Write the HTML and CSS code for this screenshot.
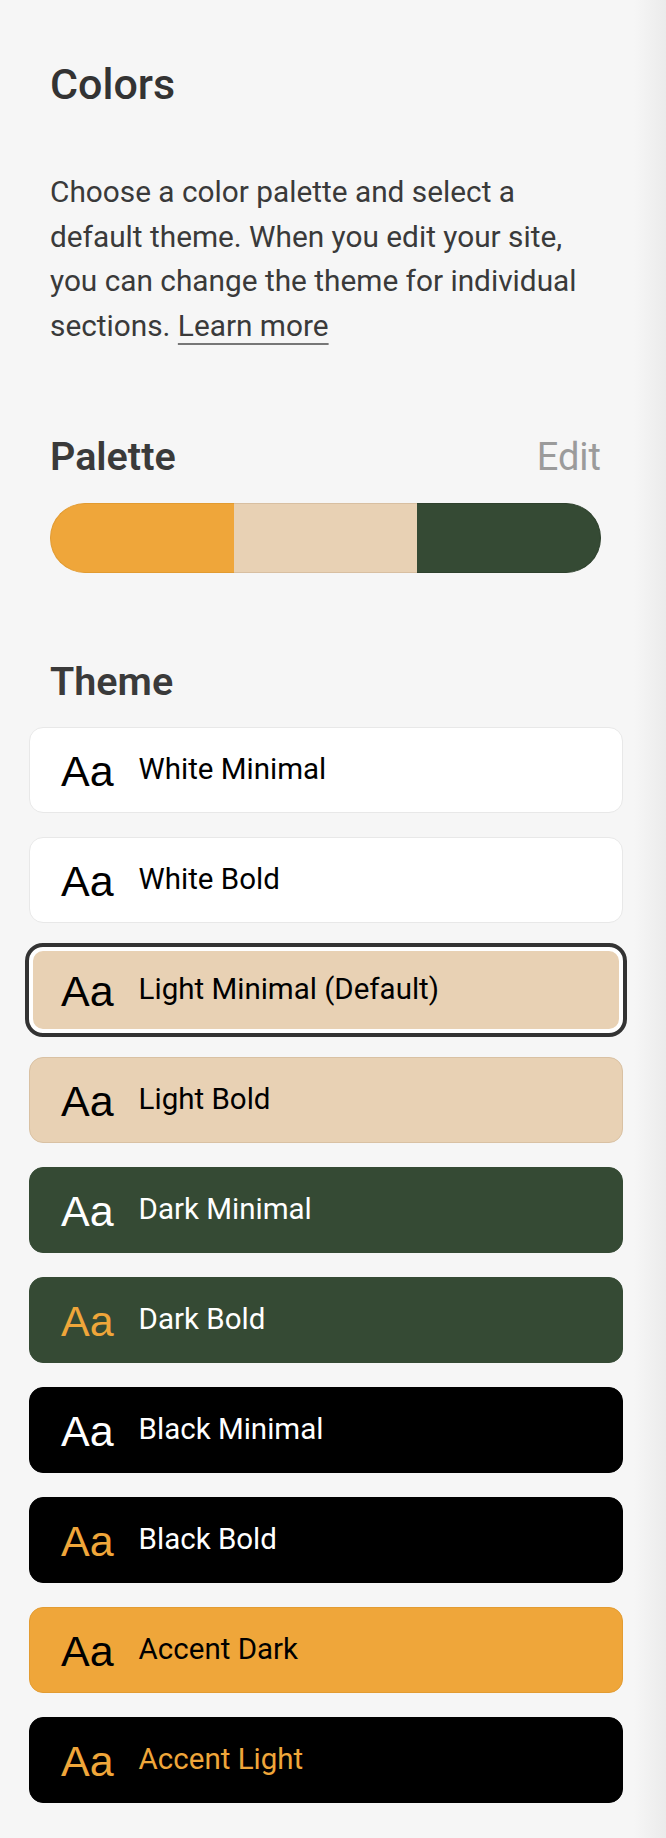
FILE: index.html
```html
<!DOCTYPE html>
<html lang="en">
<head>
<meta charset="utf-8">
<title>Colors</title>
<link rel="stylesheet" href="styles.css">
</head>
<body>
<main class="panel">
  <h1 class="title">Colors</h1>
  <p class="intro">Choose a color palette and select a default theme. When you edit your site, you can change the theme for individual sections. <a class="learn" href="#">Learn more</a></p>

  <div class="section-head palette-head">
    <h2 class="section-title">Palette</h2>
    <span class="edit">Edit</span>
  </div>
  <div class="palette">
    <span class="swatch swatch-accent"></span>
    <span class="swatch swatch-light"></span>
    <span class="swatch swatch-dark"></span>
  </div>

  <div class="section-head theme-head">
    <h2 class="section-title">Theme</h2>
  </div>
  <ul class="themes">
    <li class="theme theme-white"><span class="aa">Aa</span><span class="label">White Minimal</span></li>
    <li class="theme theme-white"><span class="aa">Aa</span><span class="label">White Bold</span></li>
    <li class="theme theme-light selected"><span class="aa">Aa</span><span class="label">Light Minimal (Default)</span></li>
    <li class="theme theme-light"><span class="aa">Aa</span><span class="label">Light Bold</span></li>
    <li class="theme theme-dark"><span class="aa">Aa</span><span class="label">Dark Minimal</span></li>
    <li class="theme theme-dark accent-aa"><span class="aa">Aa</span><span class="label">Dark Bold</span></li>
    <li class="theme theme-black"><span class="aa">Aa</span><span class="label">Black Minimal</span></li>
    <li class="theme theme-black accent-aa"><span class="aa">Aa</span><span class="label">Black Bold</span></li>
    <li class="theme theme-accent"><span class="aa">Aa</span><span class="label">Accent Dark</span></li>
    <li class="theme theme-black accent-all"><span class="aa">Aa</span><span class="label">Accent Light</span></li>
  </ul>
</main>
</body>
</html>
```
FILE: styles.css
```css
html, body {
  margin: 0;
  padding: 0;
}

body {
  min-height: 1838px;
  background: linear-gradient(to right, #f6f6f6 0, #f6f6f6 634px, #ebebeb 666px);
  font-family: Roboto, "Liberation Sans", Arial, sans-serif;
  color: #333;
}

.panel {
  padding: 60px 65px 35px 50px;
}

.title {
  margin: 0;
  font-size: 43px;
  line-height: 48px;
  font-weight: 500;
  color: #333;
}

.intro {
  margin: 62px 0 0;
  font-size: 29.8px;
  line-height: 44.5px;
  font-weight: 400;
  color: #3a3a3a;
}

.learn {
  color: #3a3a3a;
  text-decoration: underline;
  text-decoration-color: #777;
  text-decoration-thickness: 2px;
  text-underline-offset: 7px;
}

.section-head {
  display: flex;
  justify-content: space-between;
  align-items: baseline;
}

.palette-head {
  margin-top: 86px;
}

.theme-head {
  margin-top: 86.5px;
}

.section-title {
  margin: 0;
  font-size: 39.5px;
  line-height: 45px;
  font-weight: 600;
  color: #3a3a3a;
}

.edit {
  font-size: 38px;
  line-height: 45px;
  font-weight: 400;
  color: #9b9b9b;
}

.palette {
  display: flex;
  height: 70px;
  margin-top: 22.5px;
}

.swatch {
  flex: 1;
  box-sizing: border-box;
  border-top: 1px solid;
  border-bottom: 1px solid;
}

.swatch-accent {
  background: #efa63a;
  border-color: #e29b31;
  border-left: 1px solid #e29b31;
  border-radius: 35px 0 0 35px;
}

.swatch-light {
  background: #e8d1b4;
  border-color: #d8bfa1;
}

.swatch-dark {
  background: #354a34;
  border-color: #2e412d;
  border-right: 1px solid #2e412d;
  border-radius: 0 35px 35px 0;
}

.themes {
  list-style: none;
  margin: 23px -22px 0 -21px;
  padding: 0;
  display: flex;
  flex-direction: column;
  gap: 24px;
}

.theme {
  box-sizing: border-box;
  height: 86px;
  display: flex;
  align-items: center;
  gap: 25px;
  padding: 0 31px;
  border: 1px solid transparent;
  border-radius: 14px;
  color: #000;
}

.aa {
  font-family: "Liberation Sans", Arial, sans-serif;
  font-size: 43px;
  line-height: 1;
  padding-top: 3px;
}

.label {
  font-size: 29.5px;
  line-height: 1.2;
  font-weight: 400;
}

.theme-white {
  background: #fff;
  border-color: #e8e8e8;
}

.theme-light {
  background: #e8d1b4;
  border-color: #d9c1a3;
}

.theme-dark {
  background: #354a34;
  border-color: #354a34;
  color: #fff;
}

.theme-black {
  background: #000;
  border-color: #000;
  color: #fff;
}

.theme-accent {
  background: #efa63a;
  border-color: #e39c32;
  color: #000;
}

.accent-aa .aa {
  color: #efa63a;
}

.accent-all {
  color: #efa63a;
}

.selected {
  border: 4px solid #fff;
  outline: 4px solid #333;
  outline-offset: 0;
  border-radius: 14px;
  padding: 0 28px;
}
```
